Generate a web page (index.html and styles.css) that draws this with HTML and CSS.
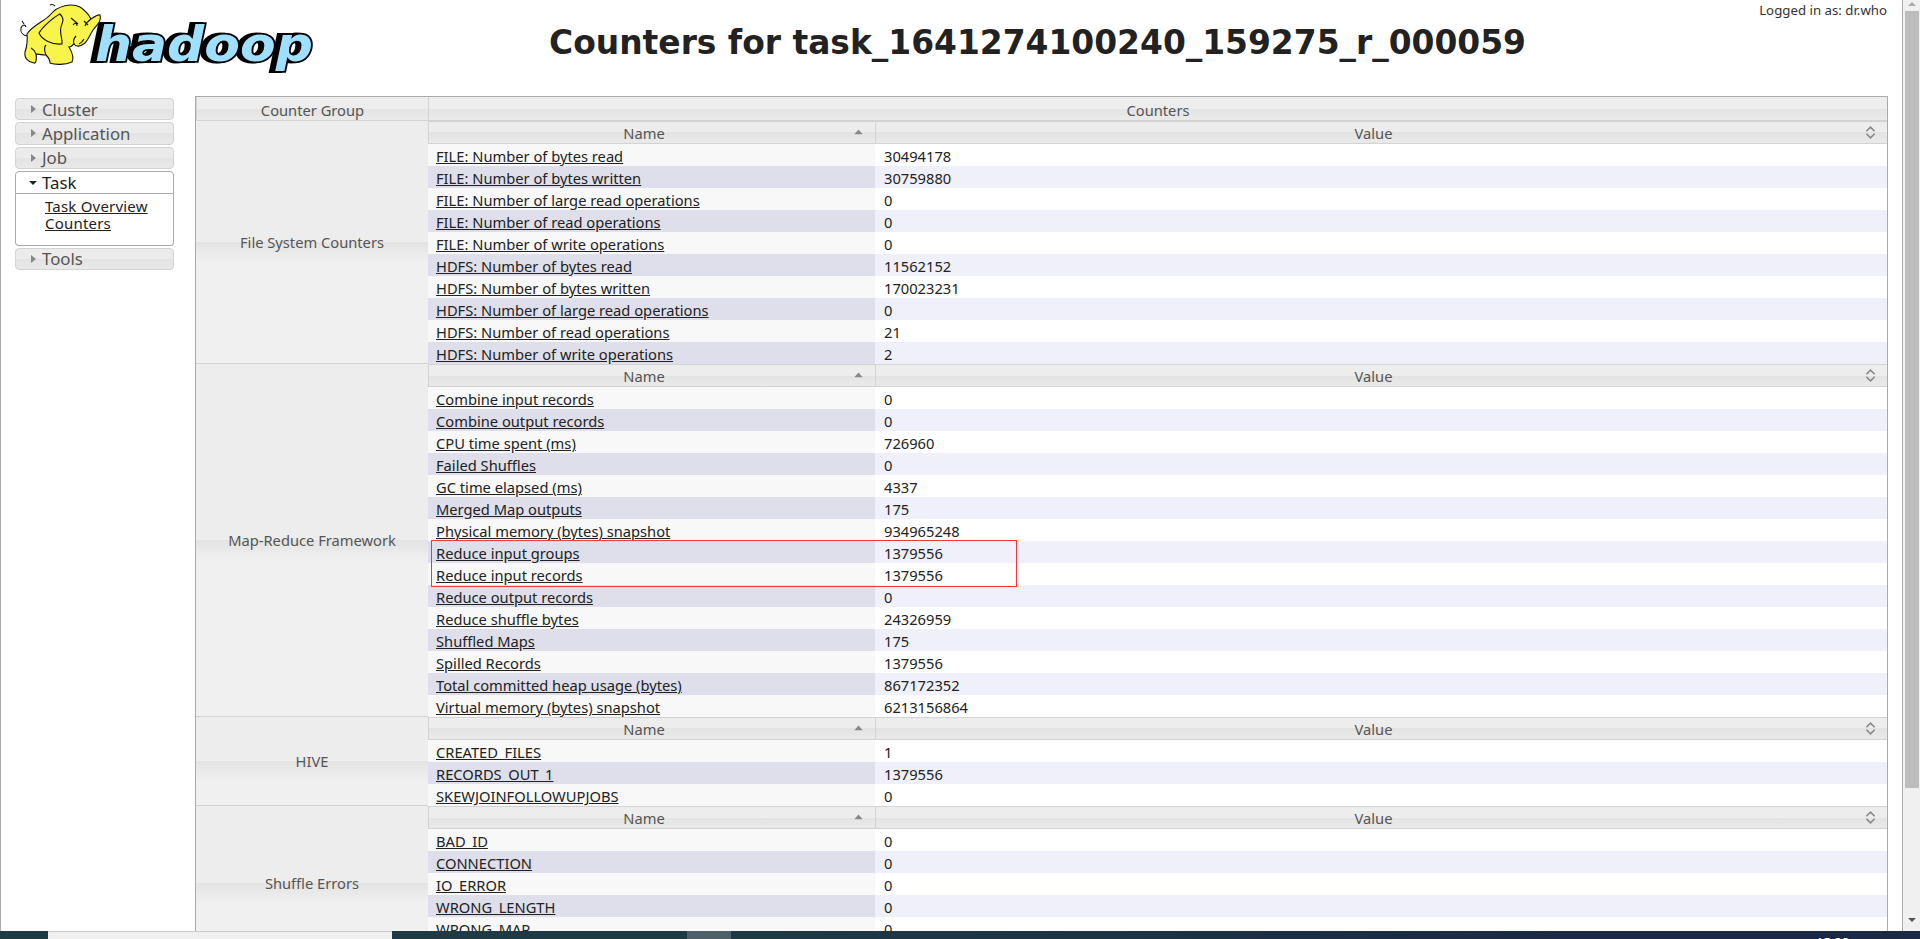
FILE: index.html
```html
<!DOCTYPE html>
<html lang="en">
<head>
  <meta charset="UTF-8">
  <title>Counters for task_1641274100240_159275_r_000059</title>
  <link rel="stylesheet" href="styles.css">
</head>
<body>
  <svg class="defs" width="0" height="0">
    <symbol id="sort-asc" viewBox="0 0 9 11"><path d="M1 7 4.5 3 8 7z" fill="#888"/></symbol>
    <symbol id="sort-both" viewBox="0 0 9 11"><path d="M1 4.5 4.5 1 8 4.5M1 6.5 4.5 10 8 6.5" fill="none" stroke="#888" stroke-width="1.3"/></symbol>
  </svg>

  <div class="screen">
    <div class="page">
      <div class="logged-in">Logged in as: dr.who</div>

      <div class="header">
        <svg class="logo" width="320" height="76" viewBox="0 0 320 76">
          <text class="logo-shadow" x="91" y="61" textLength="218" lengthAdjust="spacingAndGlyphs">hadoop</text>
          <text class="logo-word" x="95" y="61" textLength="218" lengthAdjust="spacingAndGlyphs">hadoop</text>
          <path class="ele-line" d="M27 36C23 35 20 32 21 28 22 25 25 24 26 27"/>
          <path class="ele-body" d="M27 34C33 25 45 21 50 15 58 5 72 3 80 7 86 11 89 15 91 19 94 17 98 14 100 15 102 20 98 24 93 30 90 35 88 40 85 43 80 47 76 47 74 44 72 46 70 47 69 47 72 52 74 58 72 62 65 65 55 65 50 63 50 59 47 56 46 55 42 55 38 54 36 54 37 58 36 64 34 63 28 62 24 58 25 52 27 46 28 42 27 34Z"/>
          <path class="ele-body" d="M60 14C52 18 42 28 39 33 42 40 52 45 62 44 63 38 58 32 62 24 64 20 62 16 60 14Z"/>
          <path class="ele-line" d="M71 18 78 24M73 25C75 22 77 23 77 26M91 19C88 21 86 23 85 26M84 21 88 25M74 44C73 41 74 38 76 36M55 6C53 4 52 4 50 5M24 24 22 21M46 55C44 50 44 47 46 45M36 54C35 51 33 49 31 48M79 44C81 43 83 41 84 39"/>
        </svg>
        <h1>Counters for task_1641274100240_159275_r_000059</h1>
      </div>

      <div class="main">
        <div class="nav">
          <h3 class="nav-head"><span class="arrow-right"></span>Cluster</h3>
          <h3 class="nav-head"><span class="arrow-right"></span>Application</h3>
          <h3 class="nav-head"><span class="arrow-right"></span>Job</h3>
          <h3 class="nav-head active"><span class="arrow-down"></span>Task</h3>
          <div class="nav-panel">
            <a href="#">Task Overview</a>
            <a href="#">Counters</a>
          </div>
          <h3 class="nav-head"><span class="arrow-right"></span>Tools</h3>
        </div>

        <table class="counters" id="counters">
          <colgroup><col class="group-col"><col></colgroup>
          <thead>
            <tr><th class="glass">Counter Group</th><th class="glass">Counters</th></tr>
          </thead>
          <tbody></tbody>
        </table>
      </div>
    </div>

    <div class="scrollbar">
      <span class="scroll-up"></span>
      <div class="scroll-thumb"></div>
      <span class="scroll-down"></span>
    </div>
  </div>

  <div class="taskbar">
    <div class="task-light"></div>
    <div class="task-dark"></div>
    <div class="task-active"></div>
    <div class="task-dark grow"></div>
    <span class="clock">15:28</span>
  </div>

  <script src="counters.js"></script>
</body>
</html>
```
FILE: styles.css
```css
* { box-sizing: border-box; }

html, body {
  margin: 0;
  height: 100%;
  overflow: hidden;
  background: white;
}

body {
  font-family: 'Noto Sans', sans-serif;
  font-size: 14.7px;
  color: #222;
  display: flex;
  flex-direction: column;
}

.defs { position: absolute; }

a { color: #222; }

.screen { flex: 1; min-height: 0; display: flex; }

.page {
  flex: 1;
  min-width: 0;
  position: relative;
  overflow: hidden;
  border-left: 1px solid #aaa;
  border-right: 1px solid #aaa;
}

.logged-in {
  position: absolute;
  top: 3px;
  right: 15px;
  font-size: 13.25px;
  line-height: 15px;
  color: #333;
}

/* header */
.header { display: flex; height: 96px; }

.logo { flex: none; margin-left: -1px; margin-right: -147px; }

.logo text {
  font-family: 'DejaVu Sans', sans-serif;
  font-weight: bold;
  font-style: oblique;
  font-size: 48px;
}

.logo-word { fill: #9fdfff; stroke: #000; stroke-width: 3.5px; paint-order: stroke; }
.logo-shadow { fill: #000; stroke: #000; stroke-width: 4px; }
.ele-body { fill: #f8f44c; stroke: #111; stroke-width: 1.1; }
.ele-line { fill: none; stroke: #111; stroke-width: 1.1; }

h1 {
  flex: 1;
  margin: 23px 0 0;
  text-align: center;
  font-family: 'DejaVu Sans', sans-serif;
  font-size: 32.9px;
  line-height: 40px;
  font-weight: bold;
  color: #222;
}

/* sidebar */
.main { display: flex; align-items: flex-start; padding-left: 14px; }

.nav { flex: none; width: 159px; margin-top: 2px; margin-right: 21px; }

.nav-head {
  height: 22.4px;
  margin: 0 0 2px;
  padding-left: 26px;
  display: flex;
  align-items: center;
  position: relative;
  font-size: 16.8px;
  font-weight: normal;
  color: #555;
  border: 1px solid #d3d3d3;
  border-radius: 4px;
  background: linear-gradient(#ebebeb 50%, #e3e3e3 50%, #e9e9e9);
}

.nav-head.active {
  margin-bottom: 0;
  color: #212121;
  background: white;
  border-color: #aaa;
  border-radius: 4px 4px 0 0;
}

.arrow-right {
  position: absolute;
  left: 15px;
  top: 6px;
  border-left: 5px solid #888;
  border-top: 4px solid transparent;
  border-bottom: 4px solid transparent;
}

.arrow-down {
  position: absolute;
  left: 13px;
  top: 9px;
  border-top: 4px solid #222;
  border-left: 4px solid transparent;
  border-right: 4px solid transparent;
}

.nav-panel {
  height: 52px;
  margin-bottom: 2px;
  padding: 4px 0 0 29px;
  border: 1px solid #aaa;
  border-top: 0;
  border-radius: 0 0 4px 4px;
}

.nav-panel a { display: block; line-height: 17px; font-size: 15px; letter-spacing: 0.2px; }

/* tables */
.glass {
  background-color: #ededed;
  background-image: linear-gradient(#ededed 50%, #e3e3e3 50%, #f0f0f0 55%);
  background-size: 100% 400px;
  background-position: center;
  background-repeat: repeat-x;
  font-weight: normal;
  color: #555;
}

.counters {
  flex: none;
  width: 1693px;
  table-layout: fixed;
  border-collapse: separate;
  border-spacing: 0;
  border: 1px solid #aaa;
  border-width: 1px 1px 0;
}

.group-col { width: 232px; }

.counters > thead th {
  height: 24px;
  padding: 3px 0 0;
  font-size: 14.7px;
  line-height: 18px;
  border-left: 1px solid #d3d3d3;
  border-bottom: 1px solid #d3d3d3;
}

.counters > tbody > tr > th {
  font-size: 14.7px;
  padding: 0;
  border-bottom: 1px solid #d3d3d3;
}

.counters > tbody > tr > td { padding: 0; }

.counter-table {
  width: 100%;
  table-layout: fixed;
  border-collapse: separate;
  border-spacing: 0;
}

.name-col { width: 447px; }

.counter-table th {
  height: 23px;
  padding: 1px 16px 0 0;
  position: relative;
  font-size: 14.7px;
  line-height: 18px;
  border: 1px solid #d3d3d3;
  border-width: 1px 0 1px 1px;
}

.counter-table th svg {
  position: absolute;
  right: 11px;
  top: 4px;
  width: 11px;
  height: 13px;
}

.counter-table td {
  height: 22px;
  padding: 2px 0 0 8px;
  font-size: 14.7px;
  line-height: 18px;
}

.counter-table td:last-child { padding-left: 9px; }

.counter-table tr:nth-child(odd) td:first-child { background: #f8f8f8; }
.counter-table tr:nth-child(even) td:first-child { background: #dedfea; }
.counter-table tr:nth-child(even) td:last-child { background: #f0f0fb; }

/* the red box drawn over the screenshot */
.mark {
  position: absolute;
  left: 430px;
  top: 540px;
  width: 586px;
  height: 47px;
  border: 1px solid #f33;
}

/* fake scrollbar and taskbar of the desktop */
.scrollbar {
  flex: none;
  width: 17px;
  padding: 0 1px;
  display: flex;
  flex-direction: column;
  align-items: stretch;
  background: #f0f0f0;
}

.scroll-up, .scroll-down {
  flex: none;
  align-self: center;
  width: 0;
  height: 0;
  border-left: 4px solid transparent;
  border-right: 4px solid transparent;
}

.scroll-up { border-bottom: 4px solid #aaa; margin: 2px 0 5px; }
.scroll-down { border-top: 4px solid #555; margin-top: 130px; }

.scroll-thumb { height: 777px; background: #bdbdbd; margin: 0 0 0 1px; }

.taskbar {
  flex: none;
  height: 8px;
  display: flex;
  overflow: hidden;
  position: relative;
  background: #203a45;
}

.task-light { width: 344px; margin-left: 48px; background: #f0f0f0; border-top: 1px solid #ccc; }
.task-dark { width: 295px; }
.task-active { width: 44px; background: #4e6168; }
.task-dark.grow { flex: 1; background: linear-gradient(to right, #203a45, #1a2a44 70%); }

.clock {
  position: absolute;
  left: 1816px;
  top: 4px;
  font-size: 13px;
  line-height: 15px;
  color: white;
}
```
FILE: counters.js
```js
const groups = [
  ['File System Counters', [
    ['FILE: Number of bytes read', '30494178'],
    ['FILE: Number of bytes written', '30759880'],
    ['FILE: Number of large read operations', '0'],
    ['FILE: Number of read operations', '0'],
    ['FILE: Number of write operations', '0'],
    ['HDFS: Number of bytes read', '11562152'],
    ['HDFS: Number of bytes written', '170023231'],
    ['HDFS: Number of large read operations', '0'],
    ['HDFS: Number of read operations', '21'],
    ['HDFS: Number of write operations', '2'],
  ]],
  ['Map-Reduce Framework', [
    ['Combine input records', '0'],
    ['Combine output records', '0'],
    ['CPU time spent (ms)', '726960'],
    ['Failed Shuffles', '0'],
    ['GC time elapsed (ms)', '4337'],
    ['Merged Map outputs', '175'],
    ['Physical memory (bytes) snapshot', '934965248'],
    ['Reduce input groups', '1379556'],
    ['Reduce input records', '1379556'],
    ['Reduce output records', '0'],
    ['Reduce shuffle bytes', '24326959'],
    ['Shuffled Maps', '175'],
    ['Spilled Records', '1379556'],
    ['Total committed heap usage (bytes)', '867172352'],
    ['Virtual memory (bytes) snapshot', '6213156864'],
  ]],
  ['HIVE', [
    ['CREATED_FILES', '1'],
    ['RECORDS_OUT_1', '1379556'],
    ['SKEWJOINFOLLOWUPJOBS', '0'],
  ]],
  ['Shuffle Errors', [
    ['BAD_ID', '0'],
    ['CONNECTION', '0'],
    ['IO_ERROR', '0'],
    ['WRONG_LENGTH', '0'],
    ['WRONG_MAP', '0'],
    ['WRONG_REDUCE', '0'],
  ]],
];

let html = '';
groups.forEach(([name, rows]) => {
  html += `<tr><th class="glass">${name}</th><td><table class="counter-table">
    <colgroup><col class="name-col"><col></colgroup>
    <thead><tr>
      <th class="glass">Name<svg><use href="#sort-asc"/></svg></th>
      <th class="glass">Value<svg><use href="#sort-both"/></svg></th>
    </tr></thead><tbody>`;
  rows.forEach(([label, value]) => {
    html += `<tr><td><a href="#">${label}</a></td><td>${value}</td></tr>`;
  });
  html += '</tbody></table></td></tr>';
});
document.querySelector('#counters > tbody').innerHTML = html;

const mark = document.createElement('div');
mark.className = 'mark';
document.querySelector('.page').appendChild(mark);
```
